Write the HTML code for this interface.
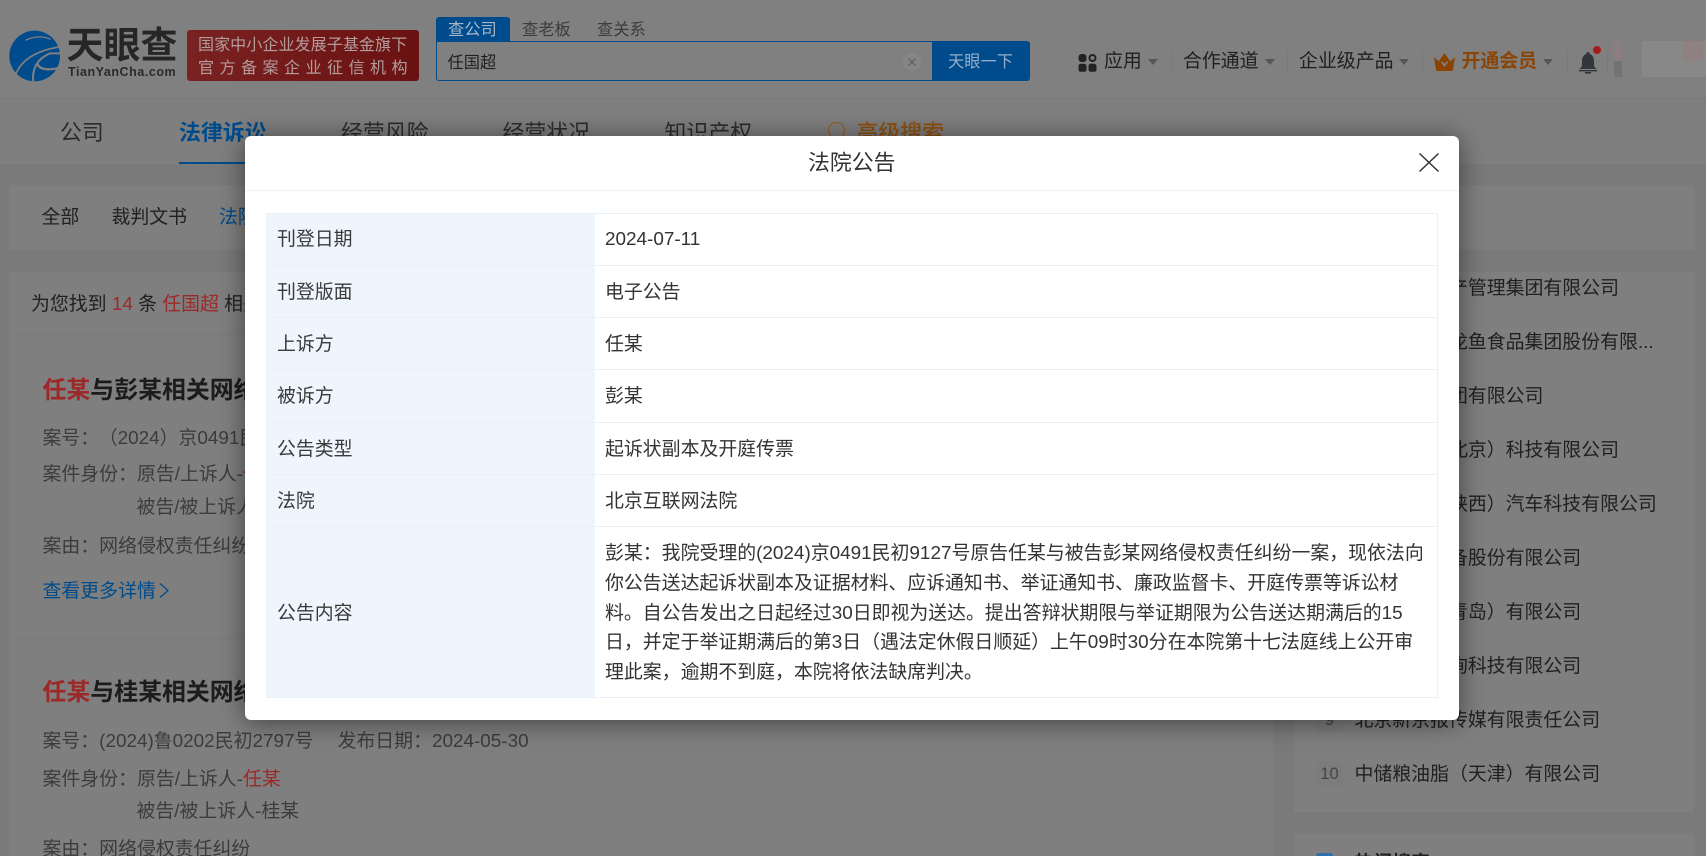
<!DOCTYPE html>
<html lang="zh-CN">
<head>
<meta charset="utf-8">
<title>法院公告</title>
<style>
html,body{margin:0;padding:0;width:1706px;height:856px;overflow:hidden;background:#7a7a7a}
body{position:relative;font-family:"Liberation Sans","Noto Sans CJK SC",sans-serif;font-size:18.9px;color:#333}
.a{position:absolute}
.t{position:absolute;white-space:nowrap;line-height:30px;height:30px}
.g{color:#3c3c3c}
.d{color:#202020}
.r{color:#9c2828}
.b{color:#004b8c}
.s{font-weight:700}
.car{position:absolute;width:0;height:0;border-left:5px solid transparent;border-right:5px solid transparent;border-top:6.5px solid #565656}
.div{position:absolute;width:1px;height:22px;top:51px;background:#787878}
.card{position:absolute;background:#7f7f7f}
.bd{position:absolute;left:1316px;width:27px;height:26px;border-radius:5px;background:#7c7c7c;color:#444;font-size:16.5px;line-height:26px;text-align:center}
.hl{position:absolute;left:266px;width:1172px;height:1px;background:#e8f0f8}
.lb{color:#3a3a3a}
.vl{color:#333}
</style>
</head>
<body>
<!-- header -->
<div class="a" style="left:0;top:0;width:1706px;height:98px;background:#808080"></div>
<div class="a" style="left:0;top:98px;width:1706px;height:1px;background:#787878"></div>
<div class="a" style="left:0;top:99px;width:1706px;height:65px;background:#7f7f7f"></div>

<svg class="a" style="left:0;top:25px" width="70" height="60" viewBox="0 0 210 180">
<circle cx="104" cy="93" r="76" fill="#004b8c"/>
<g fill="none" stroke="#808080" stroke-linecap="round">
<path d="M78 45Q115 28 150 42" stroke-width="4"/>
<path d="M46 152Q68 85 176 66" stroke-width="5"/>
<path d="M100 174Q92 110 150 85L184 85" stroke-width="6"/>
<path d="M112 118Q125 142 182 128" stroke-width="7"/>
</g>
</svg>
<div class="t s" style="left:66.500px;top:31px;font-size:37px;line-height:30px;color:#262626">天眼查</div>
<div class="t s" style="left:68px;top:57px;font-size:12.5px;letter-spacing:.55px;color:#2a2a2a">TianYanCha.com</div>

<div class="a" style="left:187px;top:30px;width:232px;height:51px;border-radius:3px;background:linear-gradient(90deg,#7a2222,#6a1212)"></div>
<div class="t" style="left:198px;top:30px;font-size:16.1px;color:#b39c9c">国家中小企业发展子基金旗下</div>
<div class="t" style="left:198px;top:53px;font-size:16.1px;letter-spacing:5.4px;color:#b39c9c">官方备案企业征信机构</div>

<!-- search -->
<div class="a" style="left:436px;top:17px;width:74px;height:25px;background:#004b8c;border-radius:3px 3px 0 0"></div>
<div class="t" style="left:448px;top:15px;font-size:16.25px;color:#a3b7cc">查公司</div>
<div class="t" style="left:522px;top:15px;font-size:16.25px;color:#3c3c3c">查老板</div>
<div class="t" style="left:597px;top:15px;font-size:16.25px;color:#3c3c3c">查关系</div>
<div class="a" style="left:436px;top:41px;width:497px;height:40px;box-sizing:border-box;border:1.5px solid #004b8c;border-radius:0 0 0 3px;background:#808080"></div>
<div class="t d" style="left:447.5px;top:47.5px;font-size:16.25px">任国超</div>
<svg class="a" style="left:903px;top:53px" width="18" height="18" viewBox="0 0 18 18"><circle cx="9" cy="9" r="9" fill="#868686"/><path d="M5.6 5.4L12.4 12.6M12.4 5.4L5.6 12.6" stroke="#585858" stroke-width="1.1" fill="none"/></svg>
<div class="a" style="left:932px;top:41px;width:98px;height:40px;background:#004b8c;border-radius:0 3px 3px 0"></div>
<div class="t" style="left:948px;top:46.5px;font-size:16.25px;color:#94adc8">天眼一下</div>

<!-- right nav -->
<svg class="a" style="left:1078px;top:54px" width="19" height="18" viewBox="0 0 19 18">
<rect x=".5" y="0" width="8" height="8" rx="3" fill="#222"/>
<circle cx="14.5" cy="4" r="3" fill="none" stroke="#222" stroke-width="2"/>
<rect x=".5" y="9.8" width="8" height="8" rx="2.2" fill="#222"/>
<rect x="10.5" y="9.8" width="8" height="8" rx="2.2" fill="#222"/>
</svg>
<div class="t d" style="left:1104px;top:47px">应用</div>
<div class="car" style="left:1148px;top:59px"></div>
<div class="div" style="left:1171px"></div>
<div class="t d" style="left:1183px;top:47px">合作通道</div>
<div class="car" style="left:1264.5px;top:59px"></div>
<div class="div" style="left:1286.5px"></div>
<div class="t d" style="left:1299px;top:47px">企业级产品</div>
<div class="car" style="left:1398.5px;top:59px"></div>
<div class="div" style="left:1422px"></div>
<svg class="a" style="left:1434px;top:52.5px" width="21" height="18.5" viewBox="0 0 62 54">
<path d="M0 12L14 24L31 0L48 24L62 12L55 54H7Z" fill="#8a4300"/>
<path d="M19 25L31 41L43 25H36L31 32L26 25Z" fill="#808080"/>
</svg>
<div class="t s" style="left:1461.5px;top:47px;color:#8a4506">开通会员</div>
<div class="car" style="left:1543px;top:59px"></div>
<div class="div" style="left:1567px"></div>
<svg class="a" style="left:1578px;top:51px" width="20" height="23" viewBox="0 0 20 23">
<path d="M10 1C11 1 11.600 1.700 11.600 2.700C14.500 3.800 16 6.500 16 10L16 14C16 15.500 17 16.500 18.500 18L1.500 18C3 16.500 4 15.500 4 14L4 10C4 6.500 5.500 3.800 8.400 2.700C8.400 1.700 9 1 10 1Z" fill="#33373d"/>
<rect x="1" y="19" width="18" height="1.400" fill="#33373d"/>
<rect x="7" y="21" width="6" height="1.600" fill="#33373d"/>
</svg>
<div class="a" style="left:1593px;top:46px;width:8px;height:8px;border-radius:50%;background:#a51c1c"></div>
<div class="div" style="left:1607px"></div>
<div class="a" style="left:1614px;top:41px;width:8px;height:20px;background:#8c7d80"></div>
<div class="a" style="left:1614px;top:61px;width:8px;height:16px;background:#737373"></div>
<div class="a" style="left:1642px;top:41px;width:64px;height:36px;background:#888888"></div>
<div class="a" style="left:1683px;top:41px;width:20px;height:20px;background:#8f8082"></div>

<!-- nav tabs -->
<div class="t" style="left:60px;top:118px;font-size:21.875px;color:#2c2c2c">公司</div>
<div class="t s" style="left:179px;top:118px;font-size:21.875px;color:#004b8c">法律诉讼</div>
<div class="a" style="left:179px;top:162px;width:90px;height:2px;background:#004b8c"></div>
<div class="t" style="left:341px;top:118px;font-size:21.875px;color:#2c2c2c">经营风险</div>
<div class="t" style="left:502.500px;top:118px;font-size:21.875px;color:#2c2c2c">经营状况</div>
<div class="t" style="left:664.500px;top:118px;font-size:21.875px;color:#2c2c2c">知识产权</div>
<div class="a" style="left:828px;top:122px;width:17px;height:17px;box-sizing:border-box;border:1.800px solid #9a5a1c;border-radius:50%"></div>
<div class="t" style="left:856.500px;top:118px;font-size:21.875px;color:#8e5010;font-weight:500">高级搜索</div>

<!-- sub tabs card -->
<div class="card" style="left:9px;top:185px;width:1685px;height:65px"></div>
<div class="t d" style="left:41.500px;top:203px">全部</div>
<div class="t d" style="left:111.500px;top:203px">裁判文书</div>
<div class="t b" style="left:219px;top:203px">法院公告</div>

<!-- main card -->
<div class="card" style="left:9px;top:271.500px;width:1264px;height:600px"></div>
<div class="t d" style="left:31px;top:290px">为您找到 <span class="r">14</span> 条 <span class="r">任国超</span> 相关法院公告</div>
<div class="a" style="left:9px;top:335px;width:1264px;height:1px;background:#7b7b7b"></div>

<div class="t s" style="left:42.500px;top:376px;font-size:23.900px;color:#1c1c1c"><span class="r">任某</span>与彭某相关网络侵权责任纠纷公告</div>
<div class="t g" style="left:42.500px;top:424px">案号：<span style="margin-left:9px">（2024）京0491民初9127号</span></div>
<div class="t g" style="left:42.500px;top:460px">案件身份：原告/上诉人-<span class="r">任某</span></div>
<div class="t g" style="left:136.500px;top:493px">被告/被上诉人-彭某</div>
<div class="t g" style="left:42.500px;top:532px">案由：网络侵权责任纠纷</div>
<div class="t b" style="left:42.500px;top:577px">查看更多详情</div>
<svg class="a" style="left:158px;top:582px" width="12" height="17" viewBox="0 0 12 17"><path d="M2 1.500L10 8.500L2 15.500" fill="none" stroke="#004b8c" stroke-width="1.300"/></svg>
<div class="a" style="left:9px;top:638.500px;width:1264px;height:1px;background:#7b7b7b"></div>

<div class="t s" style="left:42.500px;top:677.500px;font-size:23.900px;color:#1c1c1c"><span class="r">任某</span>与桂某相关网络侵权责任纠纷公告</div>
<div class="t g" style="left:42.500px;top:727px">案号：(2024)鲁0202民初2797号</div>
<div class="t g" style="left:337.500px;top:727px">发布日期：2024-05-30</div>
<div class="t g" style="left:42.500px;top:764.500px">案件身份：原告/上诉人-<span class="r">任某</span></div>
<div class="t g" style="left:136.500px;top:797px">被告/被上诉人-桂某</div>
<div class="t g" style="left:42.500px;top:834.500px">案由：网络侵权责任纠纷</div>

<!-- sidebar -->
<div class="card" style="left:1294px;top:271.500px;width:400px;height:540px"></div>
<div class="t d" style="left:1354.500px;top:274px">中联重科资产管理集团有限公司</div>
<div class="t d" style="left:1354.500px;top:328px">益海嘉里金龙鱼食品集团股份有限...</div>
<div class="t d" style="left:1354.500px;top:382px">中粮粮谷集团有限公司</div>
<div class="t d" style="left:1354.500px;top:436px">百度智能（北京）科技有限公司</div>
<div class="t d" style="left:1354.500px;top:490px">宝能汽车（陕西）汽车科技有限公司</div>
<div class="t d" style="left:1354.500px;top:544px">中联重科装备股份有限公司</div>
<div class="t d" style="left:1354.500px;top:598px">海尔智家（青岛）有限公司</div>
<div class="t d" style="left:1354.500px;top:652px">北京天眼咨询科技有限公司</div>
<div class="bd" style="top:706.500px">9</div>
<div class="t d" style="left:1354.500px;top:706px">北京新京报传媒有限责任公司</div>
<div class="bd" style="top:760.500px">10</div>
<div class="t d" style="left:1354.500px;top:760px">中储粮油脂（天津）有限公司</div>
<div class="card" style="left:1294px;top:833px;width:400px;height:40px"></div>
<div class="a" style="left:1316px;top:853px;width:17px;height:10px;background:#2f6ea8;border-radius:3px 3px 0 0"></div>
<div class="t s d" style="left:1354.500px;top:849px">热门搜索</div>

<!-- modal -->
<div class="a" style="left:244.500px;top:136px;width:1214px;height:583.500px;background:#fff;border-radius:6px;box-shadow:0 2px 26px rgba(0,0,0,.5)"></div>
<div class="a" style="left:244.500px;top:190px;width:1214px;height:1px;background:#eef2f6"></div>
<div class="t" style="left:808px;top:148px;font-size:21.875px;color:#333">法院公告</div>
<svg class="a" style="left:1418px;top:152px" width="22" height="21" viewBox="0 0 22 21"><path d="M1.500 1.500L20.500 19.500M20.500 1.500L1.500 19.500" fill="none" stroke="#333" stroke-width="1.500"/></svg>

<div class="a" style="left:266px;top:213px;width:329px;height:485px;background:#eff5fc"></div>
<div class="hl" style="top:213px"></div>
<div class="hl" style="top:265px"></div>
<div class="hl" style="top:317px"></div>
<div class="hl" style="top:369px"></div>
<div class="hl" style="top:422px"></div>
<div class="hl" style="top:474px"></div>
<div class="hl" style="top:526px"></div>
<div class="hl" style="top:697px"></div>
<div class="a" style="left:1437px;top:213px;width:1px;height:485px;background:#e8f0f8"></div>

<div class="t lb" style="left:277px;top:225px">刊登日期</div>
<div class="t lb" style="left:277px;top:278px">刊登版面</div>
<div class="t lb" style="left:277px;top:330px">上诉方</div>
<div class="t lb" style="left:277px;top:382px">被诉方</div>
<div class="t lb" style="left:277px;top:435px">公告类型</div>
<div class="t lb" style="left:277px;top:487px">法院</div>
<div class="t lb" style="left:277px;top:599px">公告内容</div>

<div class="t vl" style="left:605px;top:225px">2024-07-11</div>
<div class="t vl" style="left:605px;top:278px">电子公告</div>
<div class="t vl" style="left:605px;top:330px">任某</div>
<div class="t vl" style="left:605px;top:382px">彭某</div>
<div class="t vl" style="left:605px;top:435px">起诉状副本及开庭传票</div>
<div class="t vl" style="left:605px;top:487px">北京互联网法院</div>
<div class="t vl" style="left:605px;top:539px">彭某：我院受理的(2024)京0491民初9127号原告任某与被告彭某网络侵权责任纠纷一案，现依法向</div>
<div class="t vl" style="left:605px;top:569px">你公告送达起诉状副本及证据材料、应诉通知书、举证通知书、廉政监督卡、开庭传票等诉讼材</div>
<div class="t vl" style="left:605px;top:599px">料。自公告发出之日起经过30日即视为送达。提出答辩状期限与举证期限为公告送达期满后的15</div>
<div class="t vl" style="left:605px;top:628px">日，并定于举证期满后的第3日（遇法定休假日顺延）上午09时30分在本院第十七法庭线上公开审</div>
<div class="t vl" style="left:605px;top:658px">理此案，逾期不到庭，本院将依法缺席判决。</div>
</body>
</html>
